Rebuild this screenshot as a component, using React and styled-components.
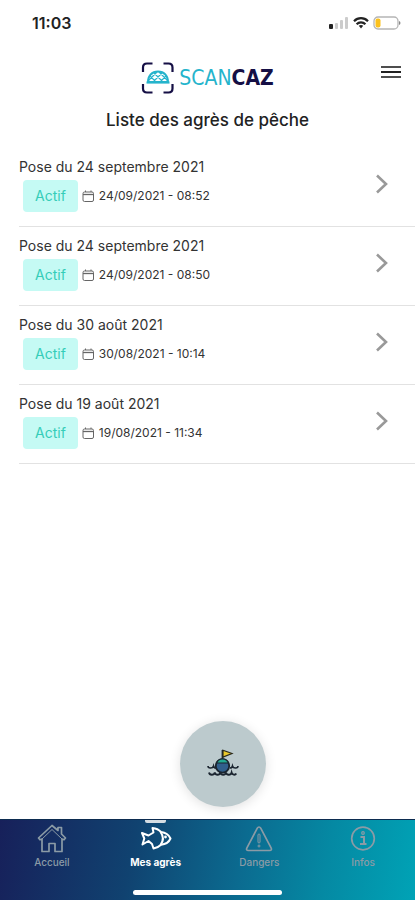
import React from 'react';
import styled, { createGlobalStyle, css } from 'styled-components';


const GlobalStyle = createGlobalStyle`
  * {
    box-sizing: border-box;
  }

  body {
    margin: 0;
    background: #fff;
    color: #222;
    font-family: Inter, "Liberation Sans", sans-serif;
  }
`;

const Screen = styled.div`
  display: flex;
  flex-direction: column;
  min-height: 100vh;
`;

const StatusBar = styled.div`
  display: flex;
  align-items: center;
  justify-content: space-between;
  height: 46px;
  padding: 0 14px 0 32px;
`;

const Clock = styled.span`
  font-size: 16px;
  font-weight: 600;
  line-height: 20px;
`;

const StatusIcons = styled.div`
  display: flex;
  align-items: center;
  gap: 4px;
`;

const Header = styled.header`
  display: grid;
  grid-template-columns: 24px 1fr 24px;
  align-items: start;
  padding: 14px 12px 0;
`;

const Logo = styled.a`
  grid-column: 2;
  justify-self: center;
  display: flex;
  align-items: center;
  gap: 5px;
  height: 36px;
  color: #25b4cc;
  font-family: "DejaVu Sans Condensed", "DejaVu Sans", sans-serif;
  font-size: 21px;
  line-height: 36px;
  text-decoration: none;
`;

const LogoStrong = styled.strong`
  color: #150f45;
  font-weight: 700;
`;

const MenuButton = styled.button`
  display: flex;
  justify-content: center;
  padding: 4px 0;
  border: 0;
  background: none;
  color: #222;
`;

const Title = styled.h1`
  margin: 12px 0 16px;
  font-size: 17px;
  font-weight: 500;
  line-height: 24px;
  text-align: center;
`;

const Main = styled.main`
  display: flex;
  flex: 1;
  flex-direction: column;
`;

const List = styled.ul`
  margin: 0;
  padding: 0 0 0 19px;
  list-style: none;
`;

const Item = styled.li`
  border-bottom: 1px solid #e2e2e2;
`;

const ItemLink = styled.a`
  display: flex;
  align-items: center;
  justify-content: space-between;
  padding: 10px 26px 14px 0;
  color: #333;
  text-decoration: none;
`;

const ItemTitle = styled.div`
  margin-bottom: 4px;
  font-size: 14px;
  line-height: 18px;
`;

const ItemInfo = styled.div`
  display: flex;
  align-items: center;
  gap: 4px;
  padding-left: 4px;
`;

const Badge = styled.span`
  padding: 0 12px;
  border-radius: 4px;
  background: #c5faf4;
  color: #35cdb8;
  font-size: 14px;
  line-height: 32px;
`;

const DateText = styled.time`
  font-size: 12px;
  line-height: 16px;
`;

const FloatingRow = styled.div`
  display: flex;
  justify-content: center;
  margin-top: auto;
  padding: 24px 0 12px 30px;
`;

const RoundButton = styled.button`
  display: flex;
  align-items: center;
  justify-content: center;
  width: 86px;
  height: 86px;
  padding: 0;
  border: 0;
  border-radius: 50%;
  background: #bccacd;
  box-shadow: 0 2px 12px rgba(0, 0, 0, 0.12);
`;

const TabBar = styled.nav`
  background: linear-gradient(100deg, #17205a 0%, #104270 32%, #0b6b90 58%, #0589a3 78%, #00a3b6 100%);
`;

const Tabs = styled.div`
  display: grid;
  grid-template-columns: repeat(4, 1fr);
  border-top: 1px solid #0c2c50;
`;

const Tab = styled.a`
  display: flex;
  flex-direction: column;
  align-items: center;
  color: #8b9ba6;
  font-size: 10px;
  font-weight: 500;
  line-height: 12px;
  text-decoration: none;

  &::before {
    content: "";
    width: 21px;
    height: 3px;
    margin-bottom: 1px;
    border-radius: 0 0 2px 2px;
  }

  svg {
    margin-bottom: 2px;
  }

  ${props => props.$active && css`
    color: #fff;
    font-weight: 700;

    &::before {
      background: #d5dde3;
    }
  `}
`;

const HomeIndicator = styled.div`
  width: 36%;
  height: 5px;
  margin: 22px auto 5px;
  border-radius: 3px;
  background: #fff;
`;


const SignalIcon = () => (
  <svg width="20" height="14" viewBox="0 0 20 14">
    <rect x="0" y="8" width="4" height="5" rx="1" fill="#222" />
    <rect x="6" y="7" width="3" height="6" rx="1" fill="#ccc" />
    <rect x="11" y="4" width="3" height="9" rx="1" fill="#ccc" />
    <rect x="16" y="1" width="3" height="12" rx="1" fill="#ccc" />
  </svg>
);

const WifiIcon = () => (
  <svg width="16" height="14" viewBox="0 0 16 14" fill="none" stroke="#222" strokeWidth="2.2">
    <path d="M1 5.2C5 1.2 11 1.2 15 5.2" />
    <path d="M3.6 8.2C6 5.7 10 5.7 12.4 8.2" />
    <path d="M5.8 9.7c1.2-1.1 3.2-1.1 4.4 0L8 12.4z" fill="#222" stroke="none" />
  </svg>
);

const BatteryIcon = () => (
  <svg width="28" height="14" viewBox="0 0 28 14">
    <rect x="1" y="1" width="24" height="12" rx="4" fill="#fff" stroke="#b5b5b5" strokeWidth="1.3" />
    <rect x="2.5" y="2.5" width="5" height="9" rx="2" fill="#fbc11d" />
    <path d="M26 5c2 .8 2 3.2 0 4z" fill="#888" />
  </svg>
);

const LogoIcon = () => (
  <svg width="33" height="32" viewBox="0 0 33 32" fill="none">
    <path
      d="M2 10V5.500C2 3 3.500 1.500 6 1.500h5.500M22.500 1.500h5c2.500 0 4 1.500 4 4V10M31.500 22v4.500c0 2.500-1.500 4-4 4h-5M11.500 30.500H6c-2.500 0-4-1.500-4-4V22"
      stroke="#150f45"
      strokeWidth="2.200"
    />
    <path d="M7 20c0-6 3.700-10.500 10-10.500S27 14 27 20z" stroke="#25b4cc" strokeWidth="1.900" />
    <path d="M5.500 20.500h23" stroke="#25b4cc" strokeWidth="2.200" />
    <path
      d="M9 14l6 6M13 11l9 9M18 10l8.500 8.500M25 14l-6 6M21 11l-9 9M16 10l-8.500 8.500"
      stroke="#25b4cc"
      strokeWidth="1.200"
    />
  </svg>
);

const MenuIcon = () => (
  <svg width="22" height="16" viewBox="0 0 22 16" stroke="currentColor" strokeWidth="2">
    <path d="M1 3h20M1 13h20" opacity="0.8" />
    <path d="M1 8h20" />
  </svg>
);

const CalendarIcon = () => (
  <svg width="13" height="13" viewBox="0 0 13 13" fill="none" stroke="#666" strokeWidth="1">
    <rect x="1" y="2" width="10.500" height="9.500" rx="1.500" />
    <path d="M1 4.500h10.500" strokeWidth="1.300" />
    <path d="M3.500 .5v1.500M9 .5v1.500" />
  </svg>
);

const ChevronIcon = () => (
  <svg width="14" height="22" viewBox="0 0 14 22" fill="none" stroke="#999" strokeWidth="2.600">
    <path d="M2 1.500l9 8.500-9 8.500" />
  </svg>
);

const BuoyIcon = () => (
  <svg width="32" height="30" viewBox="0 0 32 30" fill="none">
    <circle cx="15.500" cy="17" r="6.700" fill="#315f8c" stroke="#1b2530" strokeWidth="1.800" />
    <path d="M9.500 14c1-3 3-4.200 6-4.200s5 1.200 6 4.200z" fill="#22a892" stroke="#1b2530" strokeWidth="1.200" />
    <path d="M15.500 10V1" stroke="#1b2530" strokeWidth="1.800" />
    <path d="M16 1.200l9 3.300-9 3.500z" fill="#e9c72a" stroke="#2b2a1c" strokeWidth="1.200" />
    <path
      d="M1 17c0 2.500 4.500 3 5.500 0 .3 1.500 1 2 2.500 2M31 17c0 2.500-4.500 3-5.500 0-.3 1.500-1 2-2.500 2"
      stroke="#1b2530"
      strokeWidth="1.600"
    />
    <path
      d="M2 23.500c.5 3 5 3 5.800 0 .7 3 4.800 3 5.600 0 .7 3 4.800 3 5.600 0 .7 3 4.800 3 5.600 0 .7 2.500 3.500 3 4.700 1"
      stroke="#1b2530"
      strokeWidth="1.800"
    />
  </svg>
);

const HomeIcon = () => (
  <svg width="30" height="30" viewBox="0 0 30 30" fill="none" stroke="currentColor" strokeWidth="1.700" strokeLinejoin="round">
    <path d="M5 15v12.500h7V19.500h6v8h7V15l2 .8 1.500-1.800-4-4V3.500h-3.500V6.500L15 1.500 1.500 14 3 15.800z" />
    <path d="M5 15L15 5.500 25 15" strokeWidth="1" />
  </svg>
);

const FishIcon = () => (
  <svg width="32" height="30" viewBox="0 0 32 30" fill="none" stroke="currentColor" strokeWidth="2" strokeLinejoin="round">
    <path d="M8.500 11.500l5-3-1-4.500c3.500.3 6.500 1.700 8.500 4 4.500.5 8 3.200 9.500 6.500-1.500 3.500-5 5.800-9.500 6.200-2 2-4.500 3.200-7.500 3.800l-1.500-4.500-3.500-3-6 3.500 1.800-6L2 9z" />
    <path d="M20.500 8c3 4 3 9 0 13" />
    <circle cx="25.500" cy="13" r="1.400" fill="currentColor" stroke="none" />
  </svg>
);

const DangerIcon = () => (
  <svg width="30" height="30" viewBox="0 0 30 30" fill="none" stroke="currentColor" strokeWidth="1.700" strokeLinejoin="round">
    <path d="M15 3c.8 0 1.300.5 1.700 1.200l10.500 20c.6 1.300 0 2.300-1.400 2.300H4.200c-1.400 0-2-1-1.400-2.300l10.500-20C13.700 3.500 14.200 3 15 3z" />
    <rect x="14" y="10" width="2" height="9" rx="1" strokeWidth="1" />
    <circle cx="15" cy="22" r="1" strokeWidth="1" />
  </svg>
);

const InfoIcon = () => (
  <svg width="30" height="30" viewBox="0 0 30 30" fill="none" stroke="currentColor" strokeWidth="1.700">
    <circle cx="15" cy="14.500" r="11.300" />
    <circle cx="15" cy="9" r="1.300" strokeWidth="1.200" />
    <path d="M12.500 13H16v6.500M12 20h6.500" strokeWidth="2" />
  </svg>
);


const gears = [
  { id: 1, title: 'Pose du 24 septembre 2021', date: '24/09/2021 - 08:52', iso: '2021-09-24T08:52' },
  { id: 2, title: 'Pose du 24 septembre 2021', date: '24/09/2021 - 08:50', iso: '2021-09-24T08:50' },
  { id: 3, title: 'Pose du 30 août 2021', date: '30/08/2021 - 10:14', iso: '2021-08-30T10:14' },
  { id: 4, title: 'Pose du 19 août 2021', date: '19/08/2021 - 11:34', iso: '2021-08-19T11:34' }
];

const tabs = [
  { label: 'Accueil', href: '#accueil', Icon: HomeIcon },
  { label: 'Mes agrès', href: '#agres', Icon: FishIcon, active: true },
  { label: 'Dangers', href: '#dangers', Icon: DangerIcon },
  { label: 'Infos', href: '#infos', Icon: InfoIcon }
];

const GearItem = ({ gear }) => (
  <Item>
    <ItemLink href={`#pose-${gear.id}`}>
      <div>
        <ItemTitle>{gear.title}</ItemTitle>
        <ItemInfo>
          <Badge>Actif</Badge>
          <CalendarIcon />
          <DateText dateTime={gear.iso}>{gear.date}</DateText>
        </ItemInfo>
      </div>
      <ChevronIcon />
    </ItemLink>
  </Item>
);

const App = () => {

  return (
    <Screen>
      <GlobalStyle />

      <StatusBar>
        <Clock>11:03</Clock>
        <StatusIcons>
          <SignalIcon />
          <WifiIcon />
          <BatteryIcon />
        </StatusIcons>
      </StatusBar>

      <Header>
        <Logo href="#accueil">
          <LogoIcon />
          <span>SCAN<LogoStrong>CAZ</LogoStrong></span>
        </Logo>
        <MenuButton type="button" aria-label="Menu">
          <MenuIcon />
        </MenuButton>
      </Header>

      <Main>
        <Title>Liste des agrès de pêche</Title>
        <List>
          {gears.map(gear => <GearItem key={gear.id} gear={gear} />)}
        </List>
        <FloatingRow>
          <RoundButton type="button" aria-label="Nouvelle pose">
            <BuoyIcon />
          </RoundButton>
        </FloatingRow>
      </Main>

      <TabBar>
        <Tabs>
          {tabs.map(({ label, href, Icon, active }) => (
            <Tab key={label} href={href} $active={active}>
              <Icon />
              {label}
            </Tab>
          ))}
        </Tabs>
        <HomeIndicator />
      </TabBar>
    </Screen>
  );
};


export default App
